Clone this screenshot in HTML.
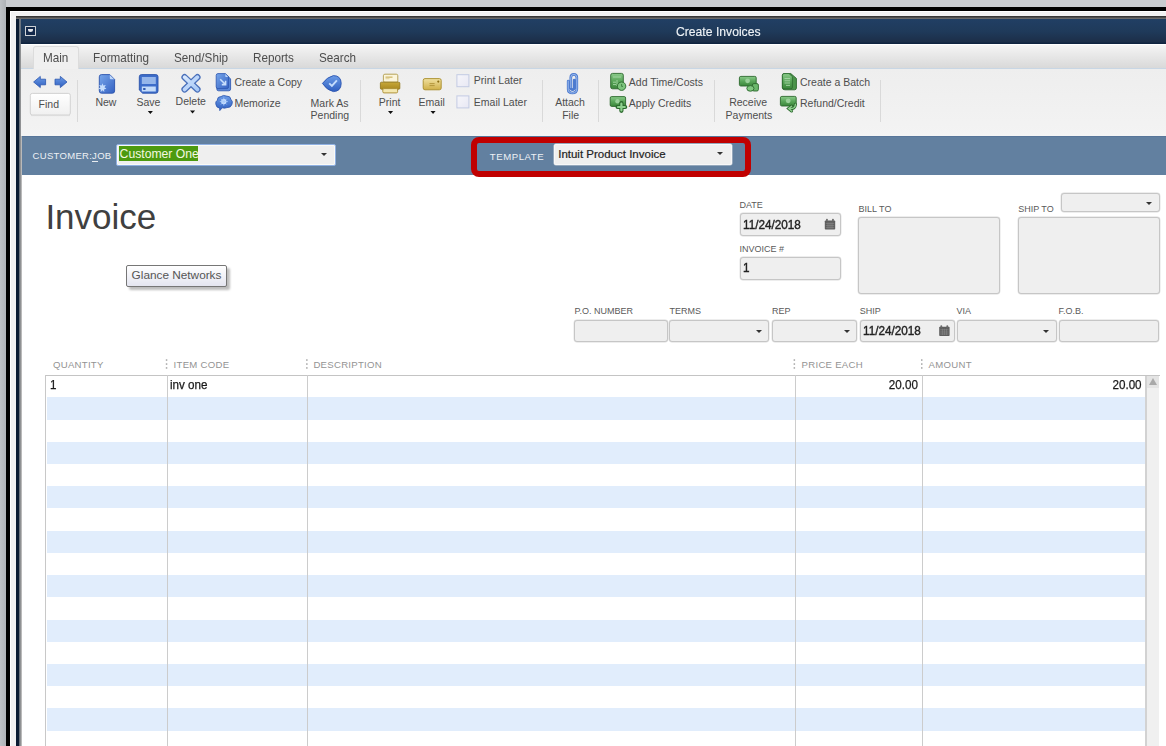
<!DOCTYPE html>
<html><head><meta charset="utf-8">
<style>
*{margin:0;padding:0;box-sizing:border-box}
html,body{width:1166px;height:746px;overflow:hidden}
body{position:relative;background:#c9ccd0;font-family:"Liberation Sans",sans-serif;color:#444}
.a{position:absolute}
.t{position:absolute;line-height:1;white-space:nowrap}
.tb{font-size:10.5px;color:#4e4e4e}
.sep{position:absolute;top:80px;width:1px;height:42px;background:#d9d9d9}
.lbl{position:absolute;line-height:1;white-space:nowrap;font-size:9.3px;color:#5a5a5a}
.fld{position:absolute;background:#efefef;border:1px solid #c6c6c6;border-radius:3px;box-shadow:0 0 0 0.4px #dcdcdc}
.dd{position:absolute;width:0;height:0;border-left:4px solid transparent;border-right:4px solid transparent;border-top:4px solid #333}
.ar{position:absolute;width:0;height:0;border-left:2.5px solid transparent;border-right:2.5px solid transparent;border-top:3px solid #000}
.gh{position:absolute;line-height:1;white-space:nowrap;font-size:9.3px;color:#939393}
.dots{position:absolute;top:359px;width:1px;height:10px;background:repeating-linear-gradient(#9a9a9a 0 2px,transparent 2px 3.3px)}
.cell{position:absolute;line-height:1;white-space:nowrap;font-size:12.4px;color:#1a1a1a;-webkit-text-stroke:0.25px #1a1a1a;transform:scaleX(0.94);transform-origin:0 0}
</style></head>
<body>
<!-- outer frame -->
<div class="a" style="left:0;top:0;width:6px;height:746px;background:linear-gradient(90deg,#bec2c6,#aeb2b6)"></div>
<div class="a" style="left:6px;top:7px;width:1160px;height:739px;background:#000"></div>
<div class="a" style="left:10px;top:11px;width:1156px;height:735px;background:#f2f2f2;border-left:1px solid #fff;border-top:1px solid #fff"></div>
<!-- window -->
<div class="a" style="left:16px;top:16px;width:1150px;height:730px;background:#fff"></div>
<div class="a" style="left:16px;top:16px;width:1150px;height:3px;background:linear-gradient(#2a2a2a,#555 60%,#7a7a7a)"></div>
<div class="a" style="left:16px;top:19px;width:3px;height:727px;background:#0b1c33"></div>
<div class="a" style="left:19px;top:19px;width:3px;height:727px;background:linear-gradient(90deg,#5a6470,#9a9a9a 60%,#d0d0d0)"></div>
<!-- title bar -->
<div class="a" style="left:20px;top:19px;width:1146px;height:25px;background:linear-gradient(#213f64,#1f3a5a 50%,#1c2e48 92%,#0f2440 96%)"></div>
<div class="a" style="left:20px;top:19px;width:1px;height:25px;background:#6a7480"></div>
<div class="a" style="left:25.1px;top:26.1px;width:11.4px;height:9.5px;border:1.9px solid #ced2d6;border-radius:0.5px;background:#12284a"></div>
<div class="a" style="left:28.2px;top:29.2px;width:5.2px;height:2.8px;background:#e4e6ea;border-radius:0 0 2.6px 2.6px"></div>
<div class="t" style="left:675.6px;top:25.3px;font-size:13.6px;color:#eef2f6;transform:scaleX(0.895);transform-origin:0 0;-webkit-text-stroke:0.15px #eef2f6">Create Invoices</div>

<!-- tab bar -->
<div class="a" style="left:21px;top:44px;width:1145px;height:25px;background:linear-gradient(#f6f6f6,#ececec 30%,#d9d9d9);border-top:1px solid #fff;border-bottom:1px solid #c8d6e4"></div>
<div class="a" style="left:33.3px;top:46.4px;width:45.6px;height:22.6px;background:#f0f0f0;border:1px solid #dcdcdc;border-bottom:none;border-radius:3px 3px 0 0"></div>
<div class="t" style="left:42.5px;top:50.9px;font-size:13px;color:#4c4c4c;transform:scaleX(0.9);transform-origin:0 0">Main</div>
<div class="t" style="left:93.4px;top:50.9px;font-size:13px;color:#4c4c4c;transform:scaleX(0.9);transform-origin:0 0">Formatting</div>
<div class="t" style="left:173.8px;top:50.9px;font-size:13px;color:#4c4c4c;transform:scaleX(0.9);transform-origin:0 0">Send/Ship</div>
<div class="t" style="left:252.8px;top:50.9px;font-size:13px;color:#4c4c4c;transform:scaleX(0.9);transform-origin:0 0">Reports</div>
<div class="t" style="left:318.9px;top:50.9px;font-size:13px;color:#4c4c4c;transform:scaleX(0.9);transform-origin:0 0">Search</div>

<!-- toolbar -->
<div class="a" style="left:21px;top:69px;width:1145px;height:67px;background:linear-gradient(#eeeeee,#f3f3f3)"></div>
<svg class="a" style="left:0;top:0" width="1166" height="140" viewBox="0 0 1166 140">
<defs>
<linearGradient id="gb" x1="0" y1="0" x2="0" y2="1"><stop offset="0" stop-color="#6b9be6"/><stop offset="1" stop-color="#2f5fc0"/></linearGradient>
<linearGradient id="gb2" x1="0" y1="0" x2="1" y2="1"><stop offset="0" stop-color="#77a6ea"/><stop offset="1" stop-color="#3461c2"/></linearGradient>
<linearGradient id="gx" x1="0" y1="0" x2="0" y2="1"><stop offset="0" stop-color="#d8e8fc"/><stop offset="1" stop-color="#a6c8f6"/></linearGradient>
<linearGradient id="gbtn" x1="0" y1="0" x2="0" y2="1"><stop offset="0" stop-color="#ffffff"/><stop offset="1" stop-color="#f0f0f0"/></linearGradient>
<linearGradient id="ggold" x1="0" y1="0" x2="0" y2="1"><stop offset="0" stop-color="#c8a838"/><stop offset="1" stop-color="#a88820"/></linearGradient>
<linearGradient id="gmail" x1="0" y1="0" x2="0" y2="1"><stop offset="0" stop-color="#f0e0a0"/><stop offset="1" stop-color="#d0b048"/></linearGradient>
<linearGradient id="ggr" x1="0" y1="0" x2="0" y2="1"><stop offset="0" stop-color="#8acb8a"/><stop offset="0.5" stop-color="#5aa65a"/><stop offset="1" stop-color="#3a863a"/></linearGradient>
<linearGradient id="gchk" x1="0" y1="0" x2="1" y2="1"><stop offset="0" stop-color="#f6f6fa"/><stop offset="1" stop-color="#e8e8f4"/></linearGradient>
</defs>
<!-- arrows -->
<path d="M33.6,82 L40.3,76.4 L40.3,79.2 L45.6,79.2 L45.6,84.8 L40.3,84.8 L40.3,87.6 Z" fill="url(#gb)" stroke="#2a56b0" stroke-width="0.8" stroke-linejoin="round"/>
<path d="M67,82 L60.3,76.4 L60.3,79.2 L55,79.2 L55,84.8 L60.3,84.8 L60.3,87.6 Z" fill="url(#gb)" stroke="#2a56b0" stroke-width="0.8" stroke-linejoin="round"/>
<!-- find button -->
<rect x="30.3" y="93.4" width="40" height="21.6" rx="2" fill="url(#gbtn)" stroke="#d2d2d2" stroke-width="1"/>
<line x1="31" y1="115.6" x2="70" y2="115.6" stroke="#dcdcdc" stroke-width="1"/>
<!-- new -->
<path d="M101.5,74.6 H109.8 L114.6,79.4 V91 Q114.6,93.2 112.4,93.2 H101.5 Q99.3,93.2 99.3,91 V76.8 Q99.3,74.6 101.5,74.6 Z" fill="url(#gb2)" stroke="#2b54ad" stroke-width="0.9"/>
<path d="M109.8,75 V78.2 Q109.8,79.2 110.8,79.2 H114.2 Z" fill="#bcd6fa"/>
<path d="M102.5,83.2 L103.3,85.6 L105.8,85 L104.5,87.2 L106.4,88.8 L104,89.4 L104.3,92 L102.5,90.3 L100.7,92 L101,89.4 L98.6,88.8 L100.5,87.2 L99.2,85 L101.7,85.6 Z" fill="#c6defc"/>
<!-- save -->
<path d="M141.6,74.6 H155.8 Q158,74.6 158,76.8 V91 Q158,93.2 155.8,93.2 H142.6 L139.3,90 V76.8 Q139.3,74.6 141.6,74.6 Z" fill="#3d6dca" stroke="#2a52aa" stroke-width="0.9"/>
<rect x="141.8" y="77" width="14" height="7" fill="#95b6ea"/>
<rect x="141.8" y="86.5" width="14" height="5" fill="#c4dcfa"/>
<ellipse cx="144.3" cy="89" rx="1.5" ry="1.1" fill="#2a52aa"/>
<!-- delete X -->
<g stroke-linecap="round"><line x1="184.6" y1="77.2" x2="197.4" y2="89.4" stroke="#4a70ba" stroke-width="6.4"/><line x1="197.4" y1="77.2" x2="184.6" y2="89.4" stroke="#4a70ba" stroke-width="6.4"/>
<line x1="184.6" y1="77.2" x2="197.4" y2="89.4" stroke="url(#gx)" stroke-width="3.8"/><line x1="197.4" y1="77.2" x2="184.6" y2="89.4" stroke="#bcd6fa" stroke-width="3.8"/></g>
<!-- create a copy -->
<path d="M218.5,75.8 H227.5 L230.6,79 V89 Q230.6,90.8 228.8,90.8 H218.5 Q216.8,90.8 216.8,89 Z" fill="#5a88d8" stroke="#2b54ad" stroke-width="0.8"/>
<path d="M218,73.6 H225.5 L228.6,76.8 V86.8 Q228.6,88.6 226.8,88.6 H218 Q216.2,88.6 216.2,86.8 V75.4 Q216.2,73.6 218,73.6 Z" fill="url(#gb2)" stroke="#2b54ad" stroke-width="0.8"/>
<path d="M225.3,74 V76.3 Q225.3,77 226,77 H228.2 Z" fill="#bcd6fa"/>
<path d="M220.2,79.2 L225,84 M225.6,80.8 V84.6 H221.8" stroke="#c8defc" stroke-width="1.6" fill="none"/>
<!-- memorize -->
<path d="M219.6,108.2 Q216,107.5 215.8,104 Q215.2,101.6 217.3,100.3 Q217.3,96.5 221,96.6 Q223.4,94.6 226.2,96 Q230.6,95.8 231,99.5 Q233,101.2 232,104.2 Q231,107.8 227,107.6 Q224.5,108.6 222.2,107.8 L219.8,110.6 Z" fill="url(#gb)" stroke="#2b54ad" stroke-width="0.8"/>
<circle cx="223.8" cy="101.6" r="2.6" fill="#d6e8fe"/>
<path d="M223.8,97.6 V105.6 M219.8,101.6 H227.8 M221,98.8 L226.6,104.4 M226.6,98.8 L221,104.4" stroke="#a8cafa" stroke-width="0.9"/>
<!-- mark as pending -->
<path d="M322.4,83.4 Q327,77 333.4,75.6 Q341,75.6 341.2,83.4 Q341,91.4 333.4,91.6 Q327,90.4 322.4,83.4 Z" fill="url(#gb)" stroke="#2a54b0" stroke-width="0.9"/>
<path d="M329.2,83.4 L331.9,86 L336.9,80.3" stroke="#c4dcfc" stroke-width="1.9" fill="none"/>
<!-- print -->
<rect x="383.4" y="74.2" width="14.4" height="8" rx="1.5" fill="#fbf5dc" stroke="#b09a48" stroke-width="0.9"/>
<rect x="385.5" y="76.4" width="7" height="1.6" fill="#d8c480"/><rect x="385.5" y="78.2" width="4" height="1" fill="#e0d098"/>
<rect x="380.4" y="82.2" width="19.4" height="7" rx="1" fill="url(#ggold)" stroke="#947a20" stroke-width="0.9"/>
<rect x="382.8" y="88.6" width="14.8" height="4.3" rx="1.2" fill="#f4e8b0" stroke="#a88a30" stroke-width="0.9"/>
<!-- email -->
<rect x="423.2" y="78.6" width="18" height="11.2" rx="1.8" fill="url(#gmail)" stroke="#a88c28" stroke-width="0.9"/>
<circle cx="438.3" cy="81.6" r="1.1" fill="#8a6c10"/>
<path d="M429.5,83.6 H434.6 M429.5,85.6 H434.6" stroke="#a88c30" stroke-width="0.8"/>
<!-- checkboxes -->
<rect x="456.9" y="74.7" width="12" height="12" fill="url(#gchk)" stroke="#c3cbe3" stroke-width="1"/>
<rect x="456.9" y="95.9" width="12" height="12" fill="url(#gchk)" stroke="#c3cbe3" stroke-width="1"/>
<!-- paperclip -->
<path d="M568.2,81 V89.2 Q568.2,93 572.4,93 Q576.8,93 576.8,89 V77.6 Q576.8,74.4 573.8,74.4 Q570.8,74.4 570.8,77.6 V87.6 Q570.8,89.6 572.6,89.6 Q574.2,89.6 574.2,87.6 V80" stroke="#4d7bcf" stroke-width="2.7" fill="none" stroke-linecap="round" stroke-linejoin="round"/>
<path d="M568.2,81 V89.2 Q568.2,93 572.4,93 Q576.8,93 576.8,89 V77.6 Q576.8,74.4 573.8,74.4 Q570.8,74.4 570.8,77.6 V87.6" stroke="#9dbcee" stroke-width="1" fill="none" stroke-linecap="round"/>
<!-- add time/costs -->
<rect x="610.7" y="73.4" width="12.6" height="15.4" rx="1.8" fill="url(#ggr)" stroke="#2b682d" stroke-width="0.9"/>
<path d="M613,77 H621 M613,82.2 H616 M613,84.6 H616 M617,80 V86" stroke="#a6d8a6" stroke-width="0.9"/>
<circle cx="621.6" cy="86.2" r="4.2" fill="#7cc47c" stroke="#2b682d" stroke-width="0.9"/>
<path d="M621.6,84 V86.4 H623" stroke="#2b682d" stroke-width="0.7" fill="none"/>
<!-- apply credits -->
<rect x="610.2" y="96.6" width="15.4" height="9.8" rx="1.4" fill="url(#ggr)" stroke="#2b682d" stroke-width="0.9"/>
<circle cx="617.5" cy="101.2" r="2.2" fill="#9ad09a"/>
<path d="M621.4,103.2 V110.8 M617.6,107 H625.2" stroke="#2b682d" stroke-width="4.2" stroke-linecap="round"/>
<path d="M621.4,103.6 V110.4 M618,107 H624.8" stroke="#8ed08e" stroke-width="2.2" stroke-linecap="round"/>
<!-- receive payments -->
<rect x="739.4" y="76.4" width="16.8" height="9.6" rx="1.4" fill="url(#ggr)" stroke="#2b682d" stroke-width="0.9"/>
<circle cx="747.6" cy="80.8" r="2.4" fill="#9ad09a"/>
<rect x="752.4" y="83.6" width="6" height="7.4" rx="1.5" fill="#6cb86c" stroke="#2b682d" stroke-width="0.9"/>
<ellipse cx="750.4" cy="88.4" rx="3.6" ry="2.8" fill="#80c880" stroke="#2b682d" stroke-width="0.9"/>
<!-- create a batch -->
<path d="M784,73.6 H790.8 L796.4,78.4 V88 Q796.4,89.8 794.6,89.8 H785 Q782.4,89.8 782.4,88 V75.4 Q782.4,73.6 784,73.6 Z" fill="#4a944a" stroke="#2b682d" stroke-width="0.9"/>
<path d="M784,73.6 H789 L792.4,76.6 V87.6 Q792.4,88.8 791,88.8 H784 Q782.4,88.8 782.4,87.4 V75.4 Q782.4,73.6 784,73.6 Z" fill="url(#ggr)" stroke="#2b682d" stroke-width="0.8"/>
<path d="M784.5,78.6 H790 M784.5,80.8 H790 M784.5,83 H790 M786,85.4 H790" stroke="#c0e4c0" stroke-width="0.7"/>
<!-- refund/credit -->
<rect x="780.4" y="96.4" width="15.8" height="9.6" rx="1.4" fill="url(#ggr)" stroke="#2b682d" stroke-width="0.9"/>
<circle cx="788.2" cy="100.8" r="2.4" fill="#9ad09a"/>
<path d="M795.4,104.2 Q795.4,109 789.6,108.6 M791.6,106.2 L788.6,108.6 L791.6,111" stroke="#2b682d" stroke-width="3" fill="none" stroke-linecap="round"/>
<path d="M795.4,104.2 Q795.4,109 789.6,108.6 M791.6,106.2 L788.6,108.6 L791.6,111" stroke="#90d090" stroke-width="1.4" fill="none" stroke-linecap="round"/>
<!-- dropdown arrows -->
<path d="M147.8,111 H152.9 L150.35,114 Z M190,110.6 H195.1 L192.55,113.6 Z M388,111 H393.1 L390.55,114 Z M430.5,111 H435.6 L433.05,114 Z" fill="#111"/>
</svg>
<div class="t tb" style="left:38.6px;top:99.2px">Find</div>
<div class="t tb" style="left:95.4px;top:97.2px">New</div>
<div class="t tb" style="left:136.4px;top:96.5px">Save</div>
<div class="t tb" style="left:175.6px;top:95.8px">Delete</div>
<div class="t tb" style="left:234.4px;top:77px">Create a Copy</div>
<div class="t tb" style="left:234.4px;top:98.2px">Memorize</div>
<div class="t tb" style="left:310.6px;top:97.5px">Mark As</div>
<div class="t tb" style="left:310.6px;top:109.6px">Pending</div>
<div class="t tb" style="left:378.8px;top:96.5px">Print</div>
<div class="t tb" style="left:418.6px;top:96.5px">Email</div>
<div class="t tb" style="left:473.8px;top:75.2px">Print Later</div>
<div class="t tb" style="left:473.8px;top:96.5px">Email Later</div>
<div class="t tb" style="left:555.2px;top:97.2px">Attach</div>
<div class="t tb" style="left:562.2px;top:110.2px">File</div>
<div class="t tb" style="left:628.8px;top:76.9px">Add Time/Costs</div>
<div class="t tb" style="left:628.8px;top:98.3px">Apply Credits</div>
<div class="t tb" style="left:729.2px;top:97.1px">Receive</div>
<div class="t tb" style="left:725.6px;top:109.7px">Payments</div>
<div class="t tb" style="left:800px;top:77.4px">Create a Batch</div>
<div class="t tb" style="left:800px;top:98.3px">Refund/Credit</div>
<div class="sep" style="left:76.5px"></div>
<div class="sep" style="left:360px"></div>
<div class="sep" style="left:542px"></div>
<div class="sep" style="left:597.6px"></div>
<div class="sep" style="left:713.8px"></div>
<div class="sep" style="left:880px"></div>


<!-- customer bar -->
<div class="a" style="left:22px;top:136px;width:1144px;height:39.3px;background:#6280a0;border-top:1px solid #58769a"></div>
<div class="a" style="left:21px;top:130px;width:1145px;height:6px;background:linear-gradient(#f3f3f3,#f5f5f5)"></div>
<div class="t" style="left:32.6px;top:151.3px;font-size:9.5px;letter-spacing:0.3px;color:#eef1f5">CUSTOMER:JOB</div>
<div class="a" style="left:92.4px;top:161.2px;width:5.4px;height:1px;background:#e8ecf0"></div>
<div class="a" style="left:115.5px;top:143.5px;width:220px;height:22.2px;border:1px solid #8fb0e2;border-radius:2px;background:#efefef;box-shadow:inset 0 0 0 1px #fafaf6"></div>
<div class="a" style="left:119.2px;top:146.4px;width:79.2px;height:14.4px;background:#4c9a0f"></div>
<div class="t" style="left:119.6px;top:147.6px;font-size:12.2px;color:#f4f8e0">Customer One</div>
<div class="dd" style="left:321px;top:152.5px;border-left-width:3.5px;border-right-width:3.5px;border-top-width:3.5px;border-top-color:#333"></div>
<div class="a" style="left:471px;top:137px;width:280px;height:39.8px;border:6px solid #c00000;border-radius:8px 8px 8px 8px"></div>
<div class="t" style="left:489.8px;top:151.8px;font-size:9.6px;letter-spacing:0.55px;color:#eef1f5">TEMPLATE</div>
<div class="a" style="left:553.6px;top:143.6px;width:178px;height:21.6px;border-radius:2px;background:#efefef;border:1px solid #f8f8f8;box-shadow:0 0 0 0.5px #c8d0d8"></div>
<div class="t" style="left:558.2px;top:148.9px;font-size:11.5px;color:#222;-webkit-text-stroke:0.2px #222">Intuit Product Invoice</div>
<div class="dd" style="left:716.5px;top:151.6px;border-left-width:3.5px;border-right-width:3.5px;border-top-width:3.5px;border-top-color:#333"></div>


<div class="t" style="left:45.4px;top:198.8px;font-size:35px;color:#404040">Invoice</div>
<div class="a" style="left:129.4px;top:267.6px;width:100.2px;height:22.4px;background:rgba(0,0,0,0.26);border-radius:2px;filter:blur(1.3px)"></div>
<div class="a" style="left:126.4px;top:264.5px;width:100.2px;height:22.4px;border:1px solid #767676;border-radius:2px;background:linear-gradient(#ffffff,#e4e5f0)"></div>
<div class="t" style="left:131.6px;top:269.7px;font-size:11.8px;color:#555">Glance Networks</div>

<div class="lbl" style="left:739.5px;top:201px;font-size:9px">DATE</div>
<div class="fld" style="left:739.5px;top:213.3px;width:101.7px;height:22.5px"></div>
<div class="t" style="left:743.2px;top:218.8px;font-size:12.7px;color:#222;-webkit-text-stroke:0.4px #222;transform:scaleX(0.925);transform-origin:0 0">11/24/2018</div>
<div class="lbl" style="left:739.5px;top:244.6px;font-size:9px">INVOICE #</div>
<div class="fld" style="left:739.5px;top:256.7px;width:101.7px;height:23px"></div>
<div class="t" style="left:743.4px;top:262.3px;font-size:12.7px;color:#222;-webkit-text-stroke:0.4px #222;transform:scaleX(0.925);transform-origin:0 0">1</div>
<div class="lbl" style="left:858.6px;top:205.3px;font-size:9px">BILL TO</div>
<div class="fld" style="left:858.4px;top:217.3px;width:142px;height:76.6px"></div>
<div class="lbl" style="left:1018.2px;top:204.6px;font-size:9px">SHIP TO</div>
<div class="fld" style="left:1060.6px;top:193px;width:99px;height:19.4px"></div>
<div class="dd" style="left:1145.5px;top:201.5px;border-left-width:3.5px;border-right-width:3.5px;border-top-width:3.5px"></div>
<div class="fld" style="left:1018px;top:217.1px;width:142px;height:77px"></div>

<div class="lbl" style="left:574.6px;top:307.2px;font-size:9px">P.O. NUMBER</div>
<div class="lbl" style="left:669.4px;top:307.2px;font-size:9px">TERMS</div>
<div class="lbl" style="left:772px;top:307.2px;font-size:9px">REP</div>
<div class="lbl" style="left:859.8px;top:307.2px;font-size:9px">SHIP</div>
<div class="lbl" style="left:956.6px;top:307.2px;font-size:9px">VIA</div>
<div class="lbl" style="left:1058.6px;top:307.2px;font-size:9px">F.O.B.</div>
<div class="fld" style="left:574.4px;top:319.6px;width:93.8px;height:22.6px"></div>
<div class="fld" style="left:669.4px;top:319.6px;width:100px;height:22.6px"></div>
<div class="dd" style="left:756.3px;top:329.5px;border-left-width:3.5px;border-right-width:3.5px;border-top-width:3.5px"></div>
<div class="fld" style="left:772.4px;top:319.6px;width:85px;height:22.6px"></div>
<div class="dd" style="left:844px;top:329.5px;border-left-width:3.5px;border-right-width:3.5px;border-top-width:3.5px"></div>
<div class="fld" style="left:860.2px;top:319.6px;width:94.4px;height:22.6px"></div>
<div class="t" style="left:862.5px;top:325.3px;font-size:12.7px;color:#222;-webkit-text-stroke:0.4px #222;transform:scaleX(0.925);transform-origin:0 0">11/24/2018</div>
<div class="fld" style="left:956.6px;top:319.6px;width:100.6px;height:22.6px"></div>
<div class="dd" style="left:1043px;top:329.5px;border-left-width:3.5px;border-right-width:3.5px;border-top-width:3.5px"></div>
<div class="fld" style="left:1058.6px;top:319.6px;width:100.8px;height:22.6px"></div>
<svg class="a" style="left:0;top:0" width="1166" height="350" viewBox="0 0 1166 350">
<g id="cal">
<rect x="824.8" y="220.4" width="10.4" height="9.2" rx="0.8" fill="#5e5e5e"/>
<rect x="826" y="218.8" width="1.8" height="2.6" rx="0.8" fill="#6a6a6a"/><rect x="832" y="218.8" width="1.8" height="2.6" rx="0.8" fill="#6a6a6a"/>
<path d="M825.8,223.4 H834.2 M825.8,225.6 H834.2 M825.8,227.6 H834.2 M828,222.4 V228.6 M830,222.4 V228.6 M832,222.4 V228.6" stroke="#8a8a8a" stroke-width="0.6"/>
</g>
<use href="#cal" x="114.4" y="106.4"/>
</svg>



<div class="gh" style="left:53px;top:360.3px;font-size:9.6px;letter-spacing:0.27px">QUANTITY</div>
<div class="gh" style="left:173.6px;top:360.3px;font-size:9.6px;letter-spacing:0.27px">ITEM CODE</div>
<div class="gh" style="left:313.4px;top:360.3px;font-size:9.6px;letter-spacing:0.27px">DESCRIPTION</div>
<div class="gh" style="left:801.6px;top:360.3px;font-size:9.6px;letter-spacing:0.27px">PRICE EACH</div>
<div class="gh" style="left:928.6px;top:360.3px;font-size:9.6px;letter-spacing:0.27px">AMOUNT</div>
<svg class="a" style="left:0;top:0" width="1166" height="746" viewBox="0 0 1166 746">
<g fill="#a4a4a4">
<rect x="165.8" y="359.3" width="1.5" height="1.5"/><rect x="165.8" y="363.3" width="1.5" height="1.5"/><rect x="165.8" y="367.2" width="1.5" height="1.5"/><rect x="306.1" y="359.3" width="1.5" height="1.5"/><rect x="306.1" y="363.3" width="1.5" height="1.5"/><rect x="306.1" y="367.2" width="1.5" height="1.5"/><rect x="793.5999999999999" y="359.3" width="1.5" height="1.5"/><rect x="793.5999999999999" y="363.3" width="1.5" height="1.5"/><rect x="793.5999999999999" y="367.2" width="1.5" height="1.5"/><rect x="921.0" y="359.3" width="1.5" height="1.5"/><rect x="921.0" y="363.3" width="1.5" height="1.5"/><rect x="921.0" y="367.2" width="1.5" height="1.5"/>
</g>
</svg>
<div class="a" style="left:46.5px;top:397.40px;width:1099px;height:22.2px;background:#e1edfc"></div><div class="a" style="left:46.5px;top:441.84px;width:1099px;height:22.2px;background:#e1edfc"></div><div class="a" style="left:46.5px;top:486.28px;width:1099px;height:22.2px;background:#e1edfc"></div><div class="a" style="left:46.5px;top:530.72px;width:1099px;height:22.2px;background:#e1edfc"></div><div class="a" style="left:46.5px;top:575.16px;width:1099px;height:22.2px;background:#e1edfc"></div><div class="a" style="left:46.5px;top:619.60px;width:1099px;height:22.2px;background:#e1edfc"></div><div class="a" style="left:46.5px;top:664.04px;width:1099px;height:22.2px;background:#e1edfc"></div><div class="a" style="left:46.5px;top:708.48px;width:1099px;height:22.2px;background:#e1edfc"></div>
<div class="a" style="left:45.2px;top:374.6px;width:1114.4px;height:1.4px;background:#c4c4c4"></div>
<div class="a" style="left:45.2px;top:375px;width:1.3px;height:371px;background:#c8c8c8"></div>
<div class="a" style="left:166.9px;top:375px;width:1.2px;height:371px;background:#cccccc"></div>
<div class="a" style="left:306.9px;top:375px;width:1.2px;height:371px;background:#cccccc"></div>
<div class="a" style="left:794.9px;top:375px;width:1.2px;height:371px;background:#cccccc"></div>
<div class="a" style="left:921.8px;top:375px;width:1.2px;height:371px;background:#cccccc"></div>
<div class="a" style="left:1145px;top:376px;width:14.4px;height:370px;background:#f0f0f0;border-left:2px solid #d2d2d2"></div>
<div class="a" style="left:1146.7px;top:376px;width:12.7px;height:12.4px;background:#e4e4e4"></div>
<div class="a" style="left:1148.6px;top:378px;width:0;height:0;border-left:4px solid transparent;border-right:4px solid transparent;border-bottom:7px solid #a9a9a9"></div>
<div class="cell" style="left:49.6px;top:379px">1</div>
<div class="cell" style="left:169.6px;top:379px">inv one</div>
<div class="cell" style="left:797px;top:379px;width:121px;text-align:right;transform-origin:100% 0">20.00</div>
<div class="cell" style="left:1000px;top:379px;width:141.6px;text-align:right;transform-origin:100% 0">20.00</div>

</body></html>
